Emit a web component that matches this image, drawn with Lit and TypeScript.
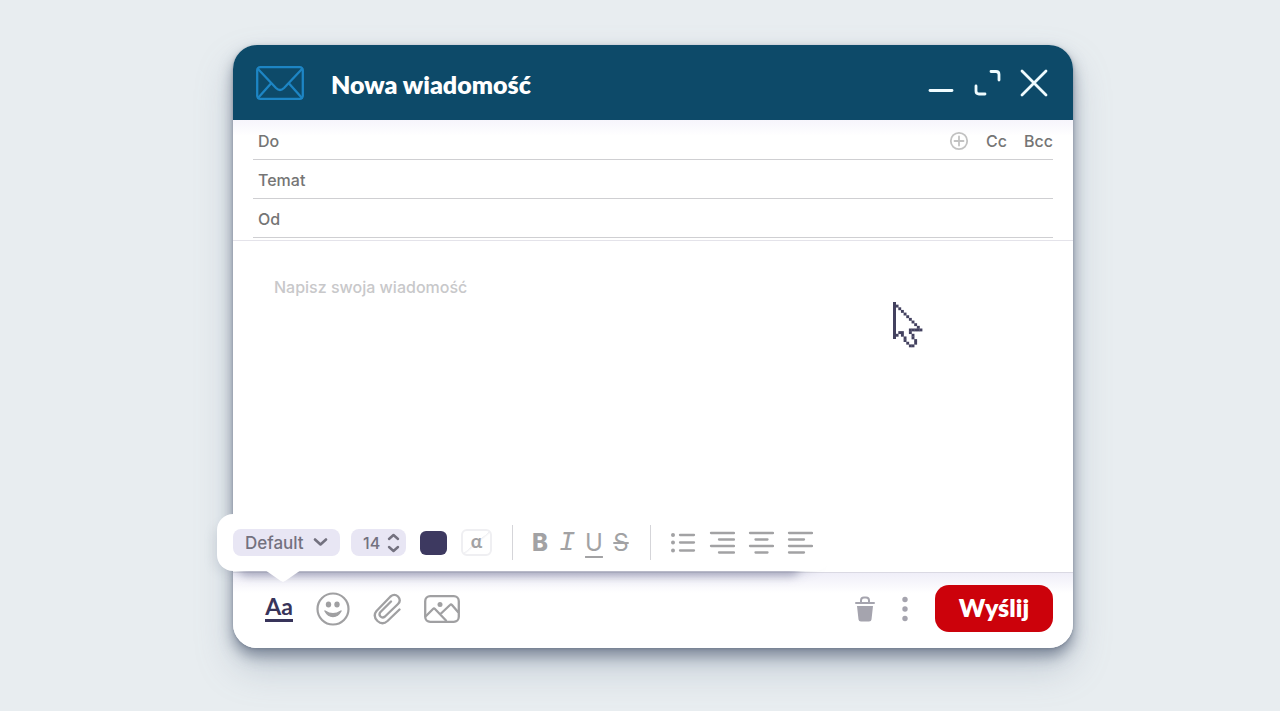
import { LitElement, html, css, svg } from "lit";
import { customElement } from "lit/decorators.js";

// Filled cells of each row of the pixel pointer, top to bottom.
const POINTER: number[][] = [
  [0], [0, 1], [0, 2], [0, 3], [0, 4], [0, 5], [0, 6], [0, 7], [0, 8], [0, 9],
  [0, 6, 7, 8, 9, 10], [0, 2, 3, 6], [0, 1, 3, 7], [0, 4, 7], [4, 8], [5, 8], [6, 7],
];

const ALIGNMENTS = [
  { label: "Do prawej", d: "M2 3H25M10 9.500H25M2 16H25M10 22.500H25" },
  { label: "Do środka", d: "M2 3H25M7.5 9.500H19.500M2 16H25M7.500 22.500H19.500" },
  { label: "Do lewej", d: "M2 3H25M2 9.500H17M2 16H25M2 22.500H17" },
];

@customElement("app-root")
export class AppRoot extends LitElement {
  static styles = css`
    :host {
      display: block;
      font-family: Inter, "Noto Sans", sans-serif;
      color: #757575;
    }
    *, *::before, *::after { box-sizing: border-box; }
    button, input, select, textarea {
      font: inherit;
      color: inherit;
      background: none;
      border: 0;
      margin: 0;
      padding: 0;
      outline: 0;
    }
    button { cursor: pointer; display: flex; align-items: center; justify-content: center; }
    svg { display: block; fill: none; stroke: currentColor; stroke-linecap: round; stroke-linejoin: round; flex: none; }
    .page {
      min-height: 100vh;
      display: flex;
      background: #e8edf0;
      padding: 45px 207px 63px 233px;
    }
    .window {
      position: relative;
      flex: 1;
      display: flex;
      flex-direction: column;
      border-radius: 24px;
      background: #fff;
      box-shadow: 0 1px 3px #5f6c7f80, 0 8px 14px #5f6b80b0, 0 20px 36px #8090a560;
    }
    .header {
      height: 75px;
      display: flex;
      align-items: center;
      padding: 0 24px 0 23px;
      border-radius: 24px 24px 0 0;
      background: #0d4a69;
      color: #fff;
    }
    .envelope { color: #1d85c4; }
    .title {
      flex: 1;
      margin: 0 0 0 27px;
      padding-top: 2px;
      font: 800 25px/32px Lato, sans-serif;
    }
    .controls { display: flex; gap: 18px; color: #f0fcff; }
    .fields {
      padding: 1px 20px 2px;
      border-bottom: 1px solid #e4e3ea;
      background: linear-gradient(#f6f5fc, #fff 16px);
      font-size: 16px;
      font-weight: 500;
    }
    .row {
      height: 39px;
      display: flex;
      align-items: center;
      gap: 17px;
      padding: 2px 0 0 5px;
      border-bottom: 1px solid #cfcfd2;
    }
    .row input { flex: 1; min-width: 0; }
    .add { color: #c2c2c2; }
    .message {
      flex: 1;
      width: 100%;
      resize: none;
      padding: 35px 41px;
      font-size: 16px;
      line-height: 22px;
      font-weight: 500;
    }
    .message::placeholder { color: #c8c8ca; opacity: 1; }
    .footer {
      height: 76px;
      display: flex;
      align-items: center;
      gap: 23px;
      padding: 0 20px 4px 32px;
      border-top: 1px solid #dad9e3;
      border-radius: 0 0 24px 24px;
      background: linear-gradient(#efeef8, #fff 20px);
      color: #a0a0a2;
    }
    .text-style {
      height: 26px;
      width: 28px;
      padding-bottom: 2px;
      border-bottom: 3px solid #38345a;
      color: #38345a;
      font: 700 23px/22px Lato, sans-serif;
    }
    .end { margin-left: auto; display: flex; align-items: center; gap: 20px; color: #a5a4ae; }
    .send {
      width: 118px;
      height: 47px;
      padding-bottom: 3px;
      border-radius: 14px;
      background: #cc020b;
      color: #fff;
      font: 800 25px/28px Lato, sans-serif;
    }
    .toolbar {
      position: absolute;
      isolation: isolate;
      left: -16px;
      bottom: 77px;
      height: 57px;
      display: flex;
      align-items: center;
      padding: 0 18px 0 16px;
      border-radius: 16px;
      background: #fff;
      box-shadow: -8px 6px 12px -6px #70799033;
      color: #a2a2a4;
    }
    .toolbar::before {
      content: "";
      position: absolute;
      left: 20px;
      right: 30px;
      bottom: 0;
      height: 20px;
      border-radius: 12px;
      box-shadow: 0 6px 10px -1px #6f719088;
      clip-path: inset(20px -20px -24px -20px);
      z-index: -1;
    }
    .tail {
      position: absolute;
      left: 48px;
      top: 56px;
      width: 36px;
      height: 12px;
      background: #fff;
      clip-path: polygon(0 0, 100% 0, 58% 88%, 50% 100%, 42% 88%);
    }
    .pill {
      position: relative;
      display: flex;
      align-items: center;
      height: 27px;
      border-radius: 8px;
      background: #e8e6f4;
      color: #73717f;
      font-size: 16px;
      font-weight: 500;
    }
    .pill select { appearance: none; width: 100%; height: 27px; padding-left: 12px; }
    .pill svg { position: absolute; right: 12px; pointer-events: none; }
    .family { width: 107px; }
    .family select { font-size: 17px; }
    .size { width: 55px; margin: 0 14px 0 11px; }
    .size svg { right: 6px; }
    .swatch { width: 27px; height: 24px; border-radius: 6px; background: #3d3960; }
    .highlight {
      width: 31px;
      height: 27px;
      margin-left: 14px;
      padding-bottom: 4px;
      border: 2px solid #efeff2;
      border-radius: 6px;
      background: linear-gradient(140deg, #fff 49%, #efeff2 50%, #fff 56%);
      font: 700 19px/20px Lato, sans-serif;
    }
    .rule { width: 1px; height: 35px; margin: 0 17px 0 20px; background: #d5d5d9; }
    .rule-wide { margin: 0 19px; }
    .letters { display: flex; gap: 7px; font-size: 24px; line-height: 26px; }
    .letters button { width: 20px; height: 30px; }
    .bold { font-weight: 800; }
    .italic { font: italic 400 27px/26px "Liberation Mono", monospace; }
    .under { text-decoration: underline 2px; text-underline-offset: 5px; }
    .strike { text-decoration: line-through 2px; }
    .aligns { display: flex; gap: 13px; }
    .pointer { position: absolute; left: 660px; top: 257px; fill: #43415f; stroke: none; pointer-events: none; }
  `;

  private pointer() {
    return html`<svg class="pointer" width="30" height="46" viewBox="0 0 30 46" aria-hidden="true">
      <path fill="#fff" d="M1 1L28 28H18L21 40L17 44L9 31L1 36Z" />
      <rect width="3" height="37" />
      ${POINTER.map((cells, y) =>
        cells
          .filter((x) => x > 0)
          .map((x) => svg`<rect x=${x * 2.65} y=${y * 2.65} width="2.9" height="2.9" />`)
      )}
    </svg>`;
  }

  render() {
    return html`<main class="page">
      <section class="window" aria-labelledby="title">
        <header class="header">
          <svg class="envelope" width="48" height="34" viewBox="0 0 48 34" stroke-width="2.3">
            <rect x="1.2" y="1.2" width="45.6" height="31.6" rx="3" />
            <path d="M2 3L20 22Q24 26 28 22L46 3M2 32L14.500 18M46 32L33.500 18" />
          </svg>
          <h1 class="title" id="title">Nowa wiadomość</h1>
          <div class="controls">
            <button aria-label="Minimalizuj">
              <svg width="28" height="30" viewBox="0 0 28 30" stroke-width="2.8"><path d="M3 22.500H25" /></svg>
            </button>
            <button aria-label="Powiększ">
              <svg width="28" height="30" viewBox="0 0 28 30" stroke-width="2.8">
                <path d="M18 3.500H23Q26 3.500 26 6.500V12M3 18V23Q3 26 6 26H12" />
              </svg>
            </button>
            <button aria-label="Zamknij">
              <svg width="30" height="30" viewBox="0 0 30 30" stroke-width="2.8"><path d="M3 3L27 27M27 3L3 27" /></svg>
            </button>
          </div>
        </header>
        <div class="fields">
          <div class="row">
            <label for="to">Do</label><input id="to" type="email" />
            <button class="add" aria-label="Dodaj odbiorcę">
              <svg width="20" height="20" viewBox="0 0 20 20" stroke-width="1.8">
                <circle cx="10" cy="10" r="8.200" /><path d="M10 5.500V14.500M5.500 10H14.500" />
              </svg>
            </button>
            <button>Cc</button>
            <button>Bcc</button>
          </div>
          <div class="row"><label for="subject">Temat</label><input id="subject" type="text" /></div>
          <div class="row"><label for="from">Od</label><input id="from" type="email" /></div>
        </div>
        <textarea class="message" aria-label="Wiadomość" placeholder="Napisz swoja wiadomość"></textarea>
        <footer class="footer">
          <button class="text-style" aria-label="Formatowanie">Aa</button>
          <button aria-label="Emotikony">
            <svg width="34" height="34" viewBox="0 0 34 34" stroke-width="2.2">
              <circle cx="17" cy="17" r="15.500" />
              <g fill="currentColor" stroke="none">
                <ellipse cx="12.500" cy="12.500" rx="2.700" ry="3" /><ellipse cx="21" cy="12.500" rx="2.700" ry="3" />
              </g>
              <path fill="currentColor" stroke-width="1.500" d="M9 19Q17 24.500 25 19Q22 24.500 17 24.500Q12 24.500 9 19Z" />
            </svg>
          </button>
          <button aria-label="Załącznik">
            <svg width="28" height="32" viewBox="0 0 28 32" stroke-width="2.300">
              <path d="M26.500 16.500L14.500 28Q9.500 32.500 4.500 28Q-.5 23 3.500 18L17.500 3.500Q21.500 .2 25 3.500Q28.500 7.500 25 11L12 23.500Q9.500 25.500 7.500 23.500Q5.500 21.500 7.500 19L18 8.500" />
            </svg>
          </button>
          <button aria-label="Obraz">
            <svg width="36" height="28" viewBox="0 0 36 28" stroke-width="2.300">
              <rect x="1.200" y="1.200" width="33.600" height="25.600" rx="5" />
              <circle cx="16" cy="9.500" r="2.500" fill="currentColor" stroke="none" />
              <path d="M2 21L9 14Q10 13 11 14L22 25.500M16.500 19L26 10Q27 9 28 10L34 17" />
            </svg>
          </button>
          <div class="end">
            <button aria-label="Usuń">
              <svg width="20" height="26" viewBox="0 0 20 26" stroke-width="2">
                <path d="M1 7H19M6 6V4.500Q6 1.500 9 1.500H11Q14 1.500 14 4.500V6" />
                <path fill="currentColor" stroke="none" d="M2 10H18L16.500 23.500Q16.300 25.500 14 25.500H6Q3.700 25.500 3.500 23.500Z" />
              </svg>
            </button>
            <button aria-label="Więcej">
              <svg width="20" height="26" viewBox="0 0 20 26"><g fill="currentColor" stroke="none">
                <circle cx="10" cy="3.500" r="2.700" /><circle cx="10" cy="13" r="2.700" /><circle cx="10" cy="22.500" r="2.700" />
              </g></svg>
            </button>
            <button class="send">Wyślij</button>
          </div>
        </footer>
        <div class="toolbar" role="toolbar" aria-label="Formatowanie tekstu">
          <span class="tail"></span>
          <div class="pill family">
            <select aria-label="Czcionka"><option>Default</option></select>
            <svg width="15" height="9" viewBox="0 0 15 9" stroke-width="2.600"><path d="M2 1.500L7.500 6.500L13 1.500" /></svg>
          </div>
          <div class="pill size">
            <select aria-label="Rozmiar"><option>14</option></select>
            <svg width="13" height="20" viewBox="0 0 13 20" stroke-width="2.400"><path d="M2 6L6.500 2L11 6M2 14L6.500 18L11 14" /></svg>
          </div>
          <button class="swatch" aria-label="Kolor tekstu"></button>
          <button class="highlight" aria-label="Wyróżnienie">α</button>
          <span class="rule"></span>
          <div class="letters">
            <button class="bold">B</button>
            <button class="italic">I</button>
            <button class="under">U</button>
            <button class="strike">S</button>
          </div>
          <span class="rule rule-wide"></span>
          <div class="aligns">
            <button aria-label="Lista">
              <svg width="26" height="26" viewBox="0 0 26 26" stroke-width="2.300">
                <path d="M10 5H24M10 12.500H24M10 20.500H24" />
                <g fill="currentColor" stroke="none"><circle cx="3" cy="5" r="2" /><circle cx="3" cy="12.500" r="2" /><circle cx="3" cy="20.500" r="2" /></g>
              </svg>
            </button>
            ${ALIGNMENTS.map(
              (a) => html`<button aria-label=${a.label}>
                <svg width="26" height="26" viewBox="0 0 26 26" stroke-width="2.300"><path d=${a.d} /></svg>
              </button>`
            )}
          </div>
        </div>
        ${this.pointer()}
      </section>
    </main>`;
  }
}
